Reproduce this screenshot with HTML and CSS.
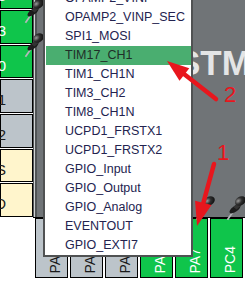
FILE: index.html
```html
<!DOCTYPE html>
<html lang="en">
<head>
  <meta charset="UTF-8">
  <title>Pinout view</title>
  <meta name="viewport" content="width=device-width, initial-scale=1.0">
  <link rel="stylesheet" href="styles.css">
</head>
<body>
  <div class="board">

    <!-- Chip and left pins -->
    <div class="top">
      <div class="left-pins">
        <div class="pin green"><span>PC13</span></div>
        <div class="pin green"><span>PC3</span></div>
        <div class="pin green"><span>PA0</span></div>
        <div class="pin grey"><span>PA1</span></div>
        <div class="pin grey"><span>PA2</span></div>
        <div class="pin power"><span>VSS</span></div>
        <div class="pin power"><span>VDD</span></div>
      </div>
      <div class="chip">
        <div class="chip-name">STM32G4</div>
      </div>
    </div>

    <!-- Bottom pins -->
    <div class="bottom-pins">
      <div class="pin grey"><span>PA3</span></div>
      <div class="pin grey"><span>PA4</span></div>
      <div class="pin grey"><span>PA5</span></div>
      <div class="pin green"><span>PA6</span></div>
      <div class="pin green"><span>PA7</span></div>
      <div class="pin green"><span>PC4</span></div>
    </div>

    <!-- Pushpins on locked pins -->
    <svg class="overlay" width="245" height="292" viewBox="0 0 245 292">
      <defs>
        <radialGradient id="pp-head" cx="0.35" cy="0.35" r="0.75">
          <stop offset="0" stop-color="#9a9a9a"/>
          <stop offset="0.45" stop-color="#2e2e2e"/>
          <stop offset="1" stop-color="#0c0c0c"/>
        </radialGradient>
        <symbol id="pushpin" viewBox="0 0 20 26">
          <line x1="3" y1="24" x2="10" y2="14" stroke="#b4b8ba" stroke-width="1.6"/>
          <ellipse cx="10" cy="14" rx="6" ry="2.6" transform="rotate(-35 10 14)" fill="#1c1c1c"/>
          <path d="M8.5 12 L13 7.5 L16 10.5 L11.5 14.5 Z" fill="#333"/>
          <ellipse cx="15" cy="6.5" rx="5.4" ry="4" transform="rotate(-35 15 6.5)" fill="url(#pp-head)"/>
        </symbol>
      </defs>
      <use href="#pushpin" x="22" y="-3" width="22" height="28"/>
      <use href="#pushpin" x="22" y="31" width="22" height="28"/>
      <use href="#pushpin" x="193" y="194" width="22" height="28"/>
      <use href="#pushpin" x="224" y="194" width="22" height="28"/>
    </svg>

    <!-- Signal menu -->
    <ul class="menu">
      <li>OPAMP2_VINP</li>
      <li>OPAMP2_VINP_SEC</li>
      <li>SPI1_MOSI</li>
      <li class="active">TIM17_CH1</li>
      <li>TIM1_CH1N</li>
      <li>TIM3_CH2</li>
      <li>TIM8_CH1N</li>
      <li>UCPD1_FRSTX1</li>
      <li>UCPD1_FRSTX2</li>
      <li>GPIO_Input</li>
      <li>GPIO_Output</li>
      <li>GPIO_Analog</li>
      <li>EVENTOUT</li>
      <li>GPIO_EXTI7</li>
    </ul>

    <!-- Red annotations -->
    <svg class="overlay marks" width="245" height="292" viewBox="0 0 245 292">
      <line x1="216" y1="99" x2="184" y2="74" />
      <polygon points="167,61 189.3,68.2 179.5,80.8" />
      <text x="224" y="102">2</text>
      <line x1="214" y1="164" x2="203.3" y2="203" />
      <polygon points="197,226 211.5,205.1 195.1,200.7" />
      <text x="217" y="160">1</text>
    </svg>

  </div>
</body>
</html>
```

FILE: styles.css
```css
body {
  margin: 0;
  background: #fff;
  font-family: "Liberation Sans", Arial, sans-serif;
  overflow: hidden;
}

.board {
  position: relative;
  width: 245px;
  height: 292px;
  overflow: hidden;
}

.top {
  display: flex;
  height: 218px;
}

/* Left pins */
.left-pins {
  width: 33px;
  margin-top: -24.7px;
  flex-shrink: 0;
}

.pin {
  box-sizing: border-box;
  border: 1px solid #000;
  display: flex;
  white-space: nowrap;
}

.pin.green {
  background: #0fc54b;
  color: #fff;
}

.pin.grey {
  background: #bcc4ca;
  color: #1a1a1a;
}

.pin.power {
  background: #fff5cc;
  color: #1a1a1a;
}

.left-pins .pin {
  height: 33.7px;
  margin-bottom: 1px;
  justify-content: flex-end;
  align-items: center;
  padding: 7px 26px 0 0;
  font-size: 15px;
}

/* Chip body */
.chip {
  flex: 1;
  box-sizing: border-box;
  border-bottom: 1px solid #000;
  background: linear-gradient(to right, #4f5355 0 1px, #cfd2d3 1px 2px, #4f5355 2px 4px, #707477 4px);
  overflow: hidden;
}

.chip-name {
  margin: 45px 0 0 144px;
  font-size: 35px;
  line-height: 35px;
  font-weight: bold;
  color: #e4e5e6;
  white-space: nowrap;
}

/* Bottom pins */
.bottom-pins {
  display: flex;
  gap: 2px;
  padding-left: 35px;
}

.bottom-pins .pin {
  width: 33px;
  height: 60px;
  align-items: flex-end;
  justify-content: center;
  padding: 0 0 4px 6px;
  font-size: 14px;
}

.bottom-pins .pin span {
  writing-mode: vertical-rl;
  transform: rotate(180deg);
  line-height: 14px;
}

/* Overlays */
.overlay {
  position: absolute;
  left: 0;
  top: 0;
  pointer-events: none;
}

.menu {
  position: absolute;
  left: 43px;
  top: -11px;
  box-sizing: border-box;
  width: 150px;
  margin: 0;
  padding: 0 0 0 1px;
  list-style: none;
  background: #fff;
  border: 2px solid #505253;
  border-top: none;
}

.menu li {
  height: 19px;
  line-height: 19px;
  padding-left: 19px;
  font-size: 12.5px;
  color: #23234f;
  white-space: nowrap;
}

.menu li.active {
  background: #4aae70;
  color: #1f2f28;
}

.marks line {
  stroke: #e8161d;
  stroke-width: 4.5;
  stroke-linecap: round;
}

.marks polygon {
  fill: #e8161d;
}

.marks text {
  fill: #e8161d;
  font-family: "Liberation Sans", Arial, sans-serif;
  font-size: 22px;
}
```
